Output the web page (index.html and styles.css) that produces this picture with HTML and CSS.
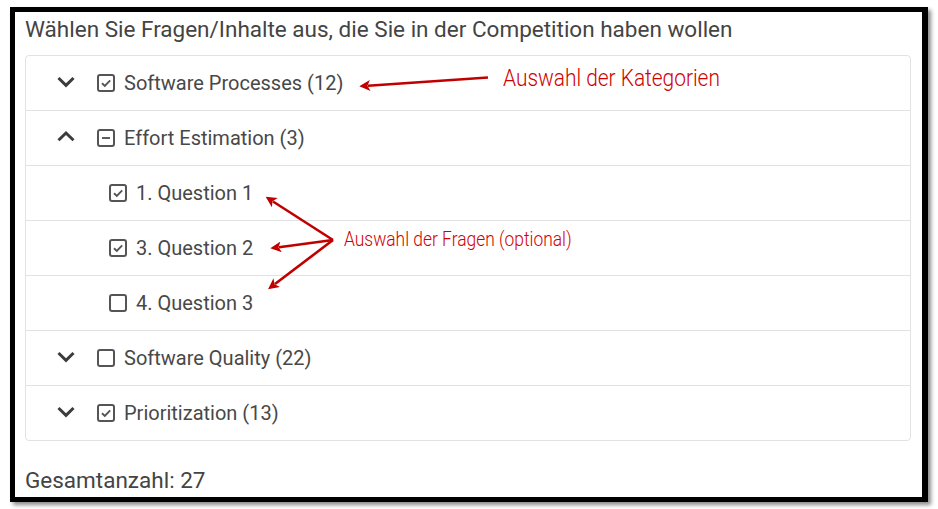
FILE: index.html
```html
<!DOCTYPE html>
<html lang="de">
<head>
<meta charset="utf-8">
<link rel="stylesheet" href="styles.css">
</head>
<body>
<div class="stage">
  <div class="frame">
    <div class="title">Wählen Sie Fragen/Inhalte aus, die Sie in der Competition haben wollen</div>
    <div class="list">
      <div class="row cat">
        <svg class="chev" viewBox="0 0 20 20"><polyline points="2.5,5 10,12.3 17.5,5"/></svg>
        <svg class="cb" viewBox="0 0 20 20"><rect x="2" y="2" width="16" height="16" rx="2"/><polyline points="6,10.3 8.8,13 14.2,7.4"/></svg>
        <span class="label">Software Processes (12)</span>
      </div>
      <div class="row cat">
        <svg class="chev" viewBox="0 0 20 20"><polyline points="2.5,12.3 10,5 17.5,12.3"/></svg>
        <svg class="cb" viewBox="0 0 20 20"><rect x="2" y="2" width="16" height="16" rx="2"/><line x1="6" y1="10" x2="14" y2="10"/></svg>
        <span class="label">Effort Estimation (3)</span>
      </div>
      <div class="row sub">
        <svg class="cb" viewBox="0 0 20 20"><rect x="2" y="2" width="16" height="16" rx="2"/><polyline points="6,10.3 8.8,13 14.2,7.4"/></svg>
        <span class="label">1. Question 1</span>
      </div>
      <div class="row sub">
        <svg class="cb" viewBox="0 0 20 20"><rect x="2" y="2" width="16" height="16" rx="2"/><polyline points="6,10.3 8.8,13 14.2,7.4"/></svg>
        <span class="label">3. Question 2</span>
      </div>
      <div class="row sub">
        <svg class="cb" viewBox="0 0 20 20"><rect x="2" y="2" width="16" height="16" rx="2"/></svg>
        <span class="label">4. Question 3</span>
      </div>
      <div class="row cat">
        <svg class="chev" viewBox="0 0 20 20"><polyline points="2.5,5 10,12.3 17.5,5"/></svg>
        <svg class="cb" viewBox="0 0 20 20"><rect x="2" y="2" width="16" height="16" rx="2"/></svg>
        <span class="label">Software Quality (22)</span>
      </div>
      <div class="row cat">
        <svg class="chev" viewBox="0 0 20 20"><polyline points="2.5,5 10,12.3 17.5,5"/></svg>
        <svg class="cb" viewBox="0 0 20 20"><rect x="2" y="2" width="16" height="16" rx="2"/><polyline points="6,10.3 8.8,13 14.2,7.4"/></svg>
        <span class="label">Prioritization (13)</span>
      </div>
    </div>
    <div class="total">Gesamtanzahl: 27</div>
  </div>

  <svg class="arrows" viewBox="0 0 938 509">
    <defs>
      <marker id="head" viewBox="0 0 10 10" refX="2" refY="5" markerWidth="4.2" markerHeight="4.2" orient="auto-start-reverse">
        <path d="M0,0 L10,5 L0,10 L2.5,5 Z" fill="#c00000"/>
      </marker>
    </defs>
    <line x1="488" y1="77.5" x2="368" y2="85.7" marker-end="url(#head)"/>
    <line x1="333" y1="240" x2="273" y2="201.5" marker-end="url(#head)"/>
    <line x1="333" y1="240" x2="279" y2="247.2" marker-end="url(#head)"/>
    <line x1="333" y1="240" x2="275" y2="284" marker-end="url(#head)"/>
  </svg>
  <div class="note note-cat">Auswahl der Kategorien</div>
  <div class="note note-q">Auswahl der Fragen (optional)</div>
</div>
</body>
</html>
```
FILE: styles.css
```css
* { box-sizing: border-box; }

html, body {
  margin: 0;
  padding: 0;
  background: #ffffff;
}

.stage {
  position: relative;
  width: 938px;
  height: 509px;
  padding: 7px 0 0 10px;
  font-family: Roboto, "Liberation Sans", sans-serif;
}

.frame {
  width: 918px;
  height: 495px;
  border: 5px solid #000;
  border-right-width: 6px;
  background: #fff;
  box-shadow: 3px 3px 4px rgba(0, 0, 0, 0.45);
  padding: 2px 11px 0 10px;
  display: flex;
  flex-direction: column;
}

.title {
  font-size: 22.5px;
  line-height: 30px;
  color: #444;
  white-space: nowrap;
}

.list {
  margin-top: 11px;
  border: 1px solid #e2e2e2;
  border-radius: 4px;
  display: flex;
  flex-direction: column;
}

.row {
  height: 55px;
  display: flex;
  align-items: center;
  border-bottom: 1px solid #e2e2e2;
  font-size: 20px;
  line-height: 30px;
  color: #484848;
}

.row:last-child {
  height: 54px;
  border-bottom: none;
}

.row.cat { padding-left: 30px; }
.row.sub { padding-left: 82px; }

.chev {
  width: 20px;
  height: 20px;
  margin-right: 20px;
  flex: none;
}

.chev polyline {
  fill: none;
  stroke: #3c3c3c;
  stroke-width: 3;
  stroke-linecap: butt;
  stroke-linejoin: miter;
}

.cb {
  width: 20px;
  height: 20px;
  margin-right: 8px;
  flex: none;
}

.cb rect {
  fill: none;
  stroke: #555;
  stroke-width: 2;
}

.cb polyline, .cb line {
  fill: none;
  stroke: #555;
  stroke-width: 1.9;
}

.total {
  margin-top: 24px;
  font-size: 22.5px;
  line-height: 30px;
  color: #444;
}

.arrows {
  position: absolute;
  left: 0;
  top: 0;
  width: 938px;
  height: 509px;
  pointer-events: none;
}

.arrows line {
  stroke: #c00000;
  stroke-width: 2.6;
}

.note {
  position: absolute;
  color: #d00000;
  font-weight: 300;
  white-space: nowrap;
  transform-origin: 0 0;
}

.note-cat {
  left: 503px;
  top: 66px;
  font-size: 24px;
  line-height: 24px;
  transform: scaleX(0.87);
}

.note-q {
  left: 344px;
  top: 229px;
  font-size: 20px;
  line-height: 20px;
  transform: scaleX(0.87);
}
```
